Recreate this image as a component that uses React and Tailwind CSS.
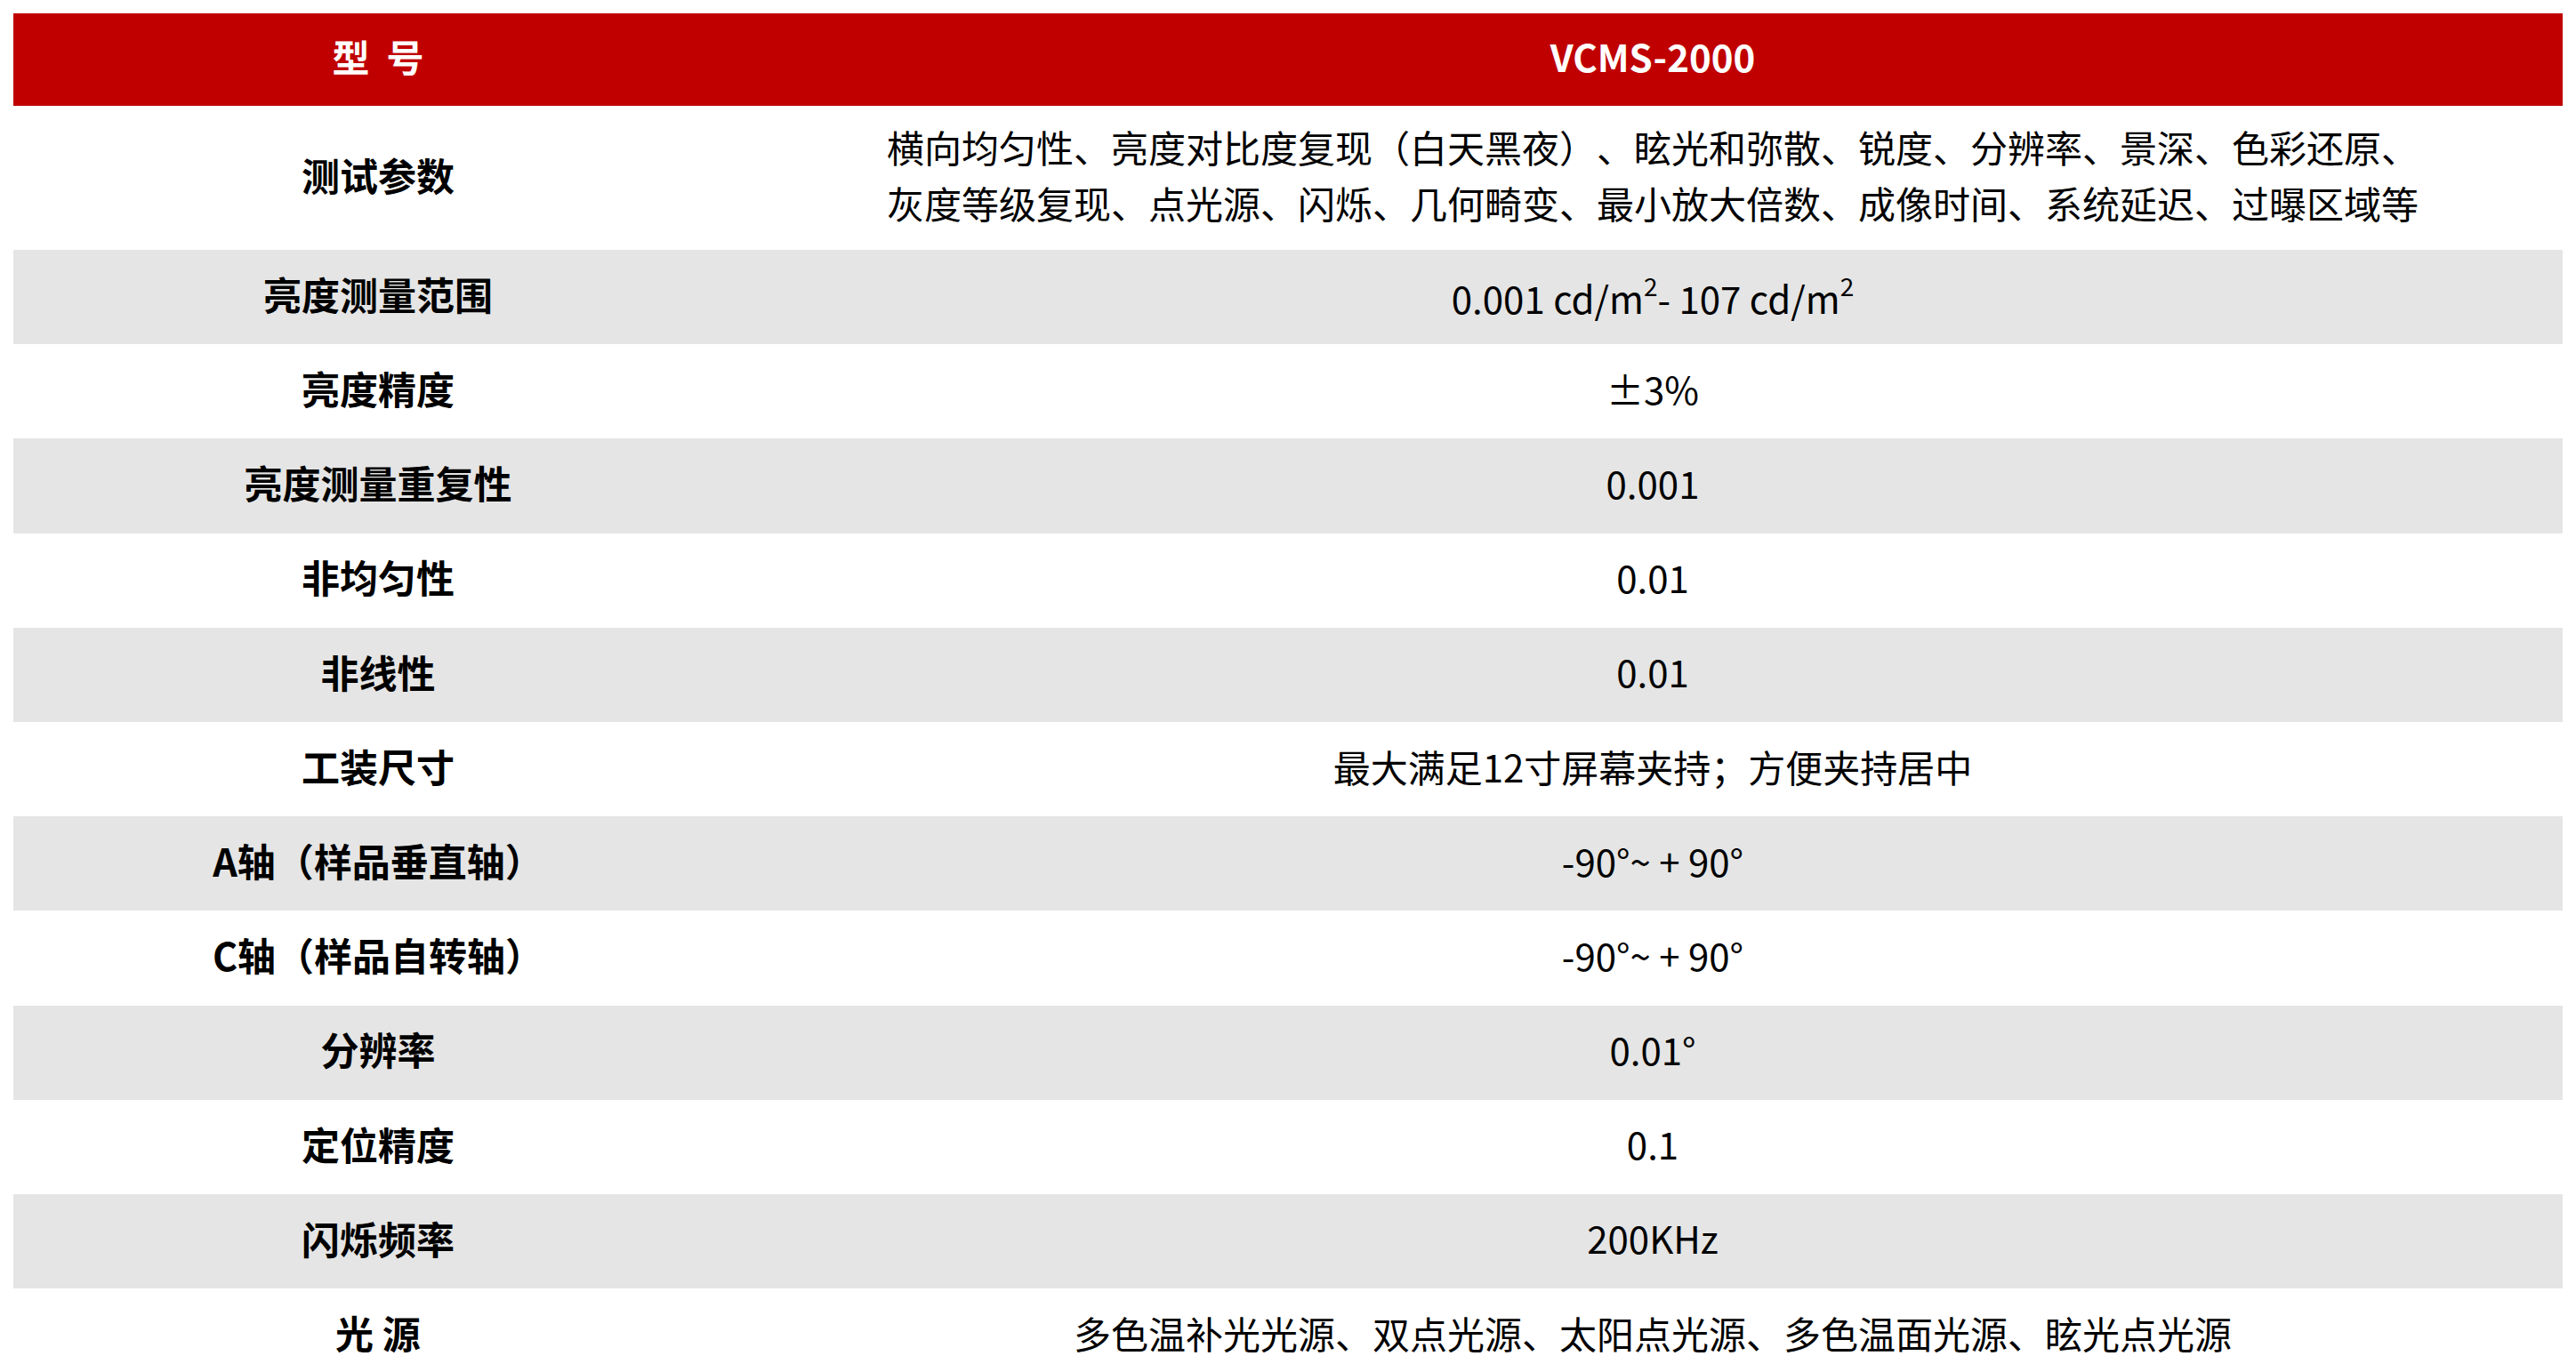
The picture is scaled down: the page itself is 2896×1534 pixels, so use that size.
import React from "react";

const rows = [
  { label: "亮度测量范围", gray: true, value: "range" },
  { label: "亮度精度", gray: false, value: "±3%" },
  { label: "亮度测量重复性", gray: true, value: "0.001" },
  { label: "非均匀性", gray: false, value: "0.01" },
  { label: "非线性", gray: true, value: "0.01" },
  { label: "工装尺寸", gray: false, value: "最大满足12寸屏幕夹持；方便夹持居中" },
  { label: "A轴（样品垂直轴）", gray: true, value: "-90°~ + 90°" },
  { label: "C轴（样品自转轴）", gray: false, value: "-90°~ + 90°" },
  { label: "分辨率", gray: true, value: "0.01°" },
  { label: "定位精度", gray: false, value: "0.1" },
  { label: "闪烁频率", gray: true, value: "200KHz" },
  { label: "光 源", gray: false, value: "多色温补光光源、双点光源、太阳点光源、多色温面光源、眩光点光源" },
];

function Range() {
  return (
    <span className="relative top-[4px]">
      0.001 cd/m
      <sup className="text-[28px] top-[-20px]">2</sup>- 107 cd/m
      <sup className="text-[28px] top-[-20px]">2</sup>
    </span>
  );
}

export default function App() {
  return (
    <div className="w-full h-[1534px] overflow-hidden bg-white px-[15px] pt-[15px] font-['Noto_Sans_CJK_SC','Noto_Sans',sans-serif] text-black [text-spacing-trim:space-all]">
      <div className="flex h-[104px] bg-[#c00000] text-white font-bold text-[42px] pb-[9px]">
        <div className="w-[820px] flex items-center justify-center whitespace-pre">型  号</div>
        <div className="flex-1 flex items-center justify-center">VCMS-2000</div>
      </div>
      <div className="flex h-[162px] text-[42px] pb-[8px]">
        <div className="w-[820px] flex items-center justify-center font-bold text-[43px]">测试参数</div>
        <div className="flex-1 flex items-center justify-center text-center leading-[63px]">
          <div>
            横向均匀性、亮度对比度复现（白天黑夜）、眩光和弥散、锐度、分辨率、景深、色彩还原、
            <br />
            灰度等级复现、点光源、闪烁、几何畸变、最小放大倍数、成像时间、系统延迟、过曝区域等
          </div>
        </div>
      </div>
      {rows.map((r, i) => (
        <div
          key={i}
          className={`flex h-[106.2px] text-[42px] pb-[8px] ${r.gray ? "bg-[#e5e5e5]" : "bg-white"}`}
        >
          <div className="w-[820px] flex items-center justify-center font-bold text-[43px] whitespace-pre">
            {r.label}
          </div>
          <div className="flex-1 flex items-center justify-center whitespace-pre">
            {r.value === "range" ? <Range /> : r.value}
          </div>
        </div>
      ))}
    </div>
  );
}
